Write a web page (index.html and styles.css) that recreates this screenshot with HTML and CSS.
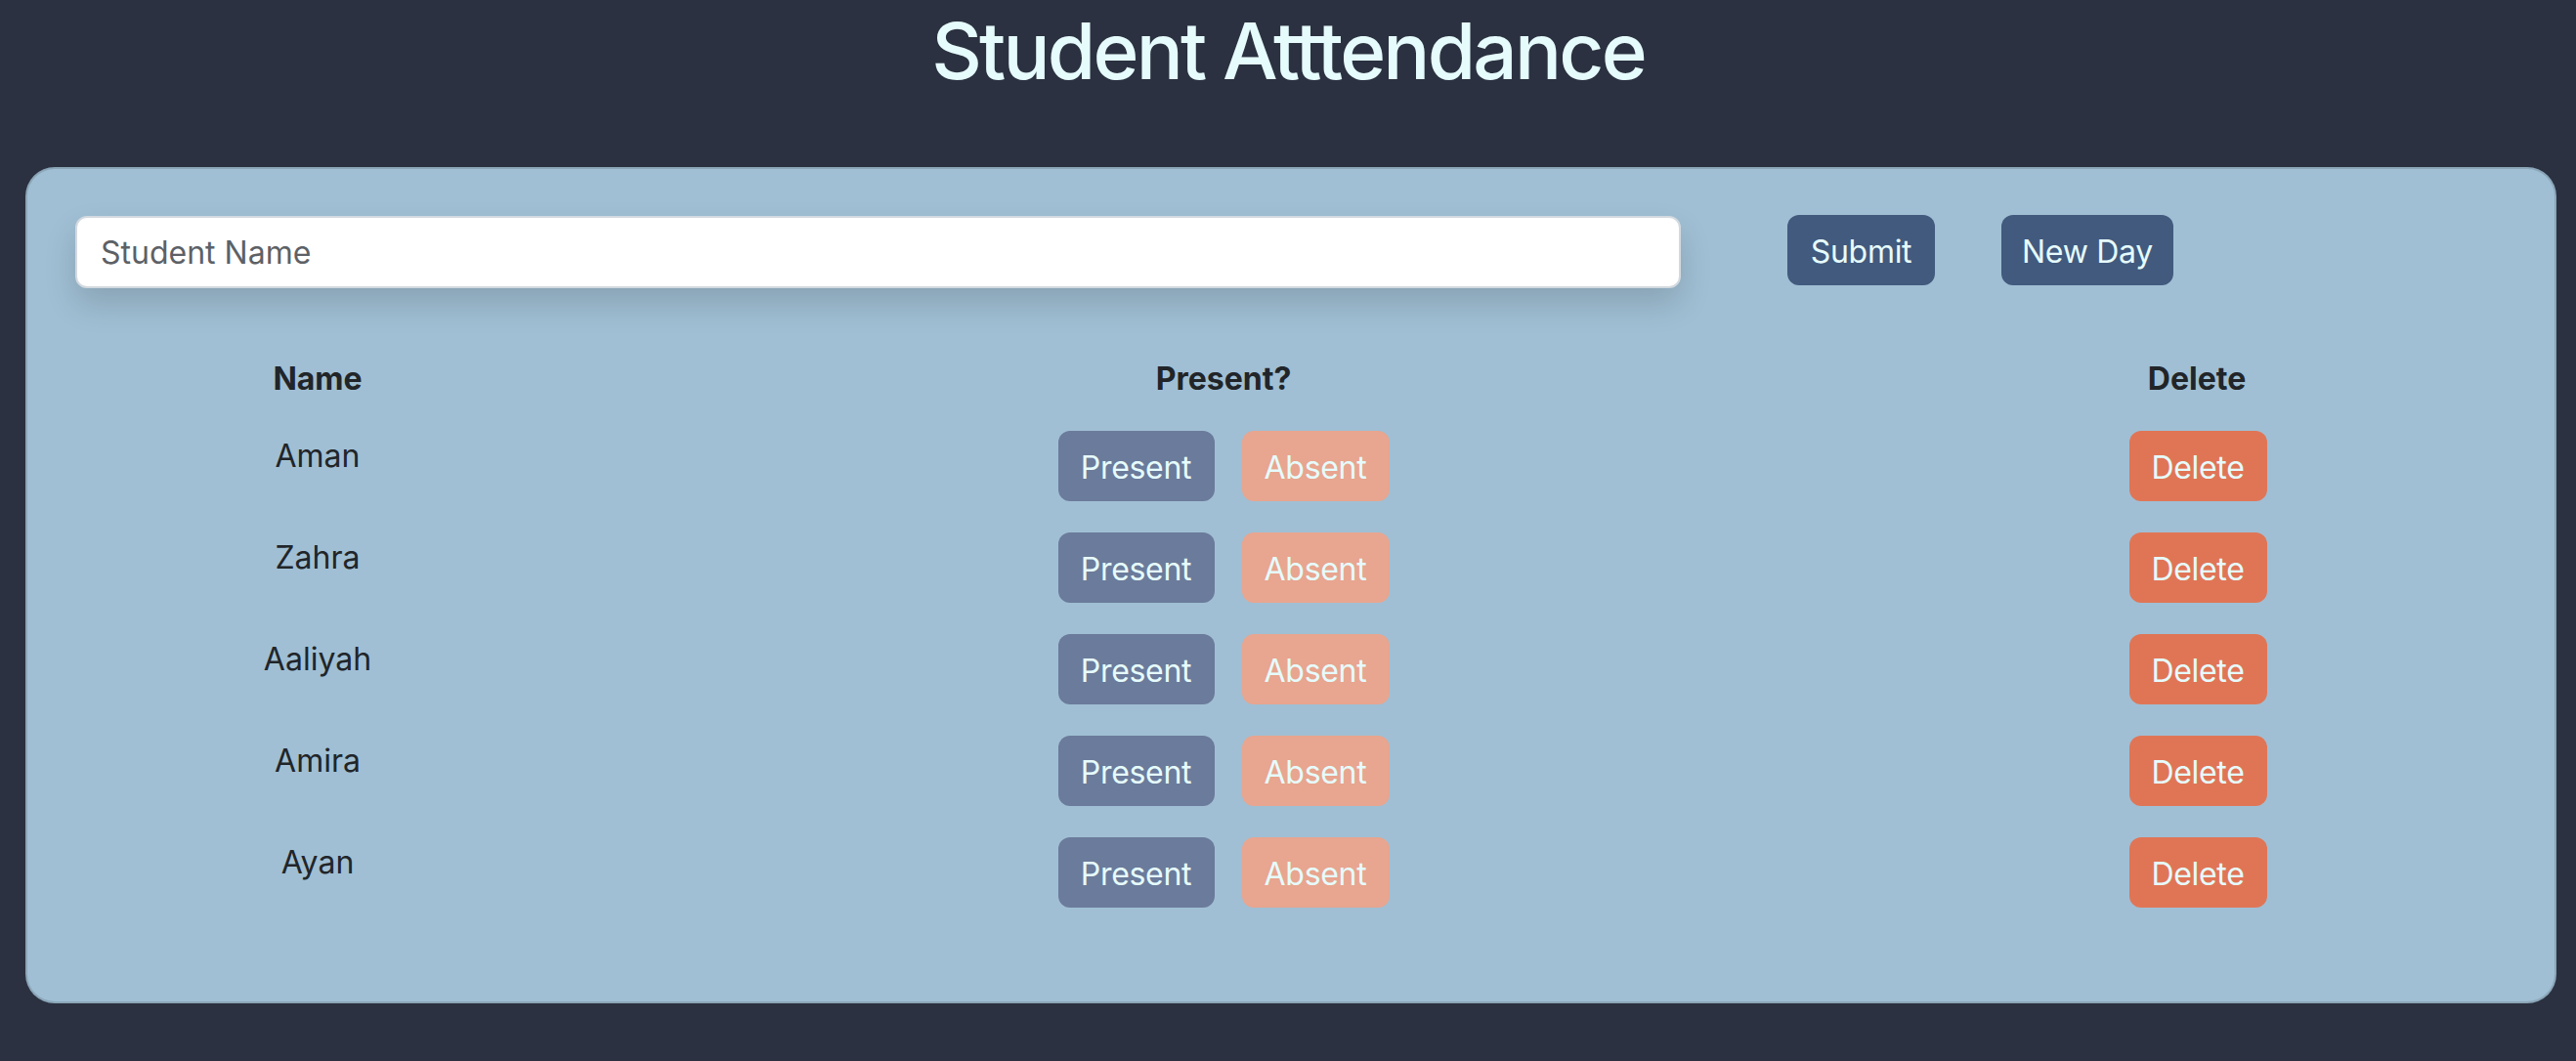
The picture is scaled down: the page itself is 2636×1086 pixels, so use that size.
FILE: index.html
```html
<!DOCTYPE html>
<html lang="en">
<head>
<meta charset="utf-8">
<title>Student Attendance</title>
<link rel="stylesheet" href="styles.css">
</head>
<body>
<h1 class="title">Student Atttendance</h1>
<div class="card">
  <div class="entry">
    <input class="name-input" type="text" placeholder="Student Name">
    <button class="btn btn-dark submit">Submit</button>
    <button class="btn btn-dark newday">New Day</button>
  </div>
  <table class="roster">
    <thead>
      <tr><th class="col-name">Name</th><th class="col-present">Present?</th><th class="col-delete">Delete</th></tr>
    </thead>
    <tbody>
      <tr><td>Aman</td><td><div class="actions"><button class="btn btn-present">Present</button><button class="btn btn-absent">Absent</button></div></td><td><button class="btn btn-delete">Delete</button></td></tr>
      <tr><td>Zahra</td><td><div class="actions"><button class="btn btn-present">Present</button><button class="btn btn-absent">Absent</button></div></td><td><button class="btn btn-delete">Delete</button></td></tr>
      <tr><td>Aaliyah</td><td><div class="actions"><button class="btn btn-present">Present</button><button class="btn btn-absent">Absent</button></div></td><td><button class="btn btn-delete">Delete</button></td></tr>
      <tr><td>Amira</td><td><div class="actions"><button class="btn btn-present">Present</button><button class="btn btn-absent">Absent</button></div></td><td><button class="btn btn-delete">Delete</button></td></tr>
      <tr><td>Ayan</td><td><div class="actions"><button class="btn btn-present">Present</button><button class="btn btn-absent">Absent</button></div></td><td><button class="btn btn-delete">Delete</button></td></tr>
    </tbody>
  </table>
</div>
</body>
</html>
```
FILE: styles.css
```css
body {
  margin: 0;
  background: #2b3140;
  font-family: Inter, "Noto Sans", "Liberation Sans", sans-serif;
}

.title {
  margin: 0;
  padding-top: 4px;
  height: 95px;
  box-sizing: border-box;
  text-align: center;
  font-size: 80px;
  font-weight: 500;
  line-height: 96px;
  letter-spacing: -2.8px;
  color: #e6fbfc;
}

.card {
  box-sizing: border-box;
  height: 856px;
  margin: 76px 20px 0 26px;
  padding: 48px 49px;
  border: 2px solid rgba(0, 0, 0, 0.13);
  border-radius: 30px;
  background: #a0bfd4;
}

.entry {
  display: flex;
  align-items: flex-start;
}

.name-input {
  box-sizing: border-box;
  width: 1643px;
  height: 74px;
  padding: 0 24px;
  border: 2px solid #d3d9df;
  border-radius: 12px;
  background: #fff;
  box-shadow: 0 16px 32px rgba(0, 0, 0, 0.15);
  font-family: inherit;
  font-size: 32px;
  color: #212529;
  outline: none;
}

.name-input::placeholder {
  color: #5d6166;
}

.btn {
  box-sizing: border-box;
  height: 72px;
  padding: 4px 0 0;
  border: none;
  border-radius: 12px;
  font-family: inherit;
  font-size: 32px;
  line-height: 48px;
  letter-spacing: -0.3px;
  color: #e6fbfc;
  cursor: pointer;
}

.btn-dark {
  background: #415a7e;
  margin-top: -1px;
}

.submit {
  width: 151px;
  margin-left: 109px;
}

.newday {
  width: 176px;
  margin-left: 68px;
}

.roster {
  width: 100%;
  margin-top: 50px;
  border-collapse: collapse;
}

.roster th,
.roster td {
  padding: 16px 0;
  text-align: center;
  vertical-align: top;
  font-size: 32px;
  line-height: 48px;
  color: #212529;
}

.roster th {
  padding: 19px 0 13px;
  font-weight: 700;
}

.roster td:first-child {
  padding-top: 18px;
  padding-bottom: 14px;
}

.col-name {
  width: 496px;
}

.col-present {
  width: 1358px;
}

.actions {
  display: flex;
  justify-content: center;
  gap: 28px;
}

.btn-present {
  width: 160px;
  background: #6b7b9b;
}

.btn-absent {
  width: 151px;
  background: #e8a58f;
}

.btn-delete {
  width: 141px;
  margin-left: 2px;
  background: #e07556;
}
```
